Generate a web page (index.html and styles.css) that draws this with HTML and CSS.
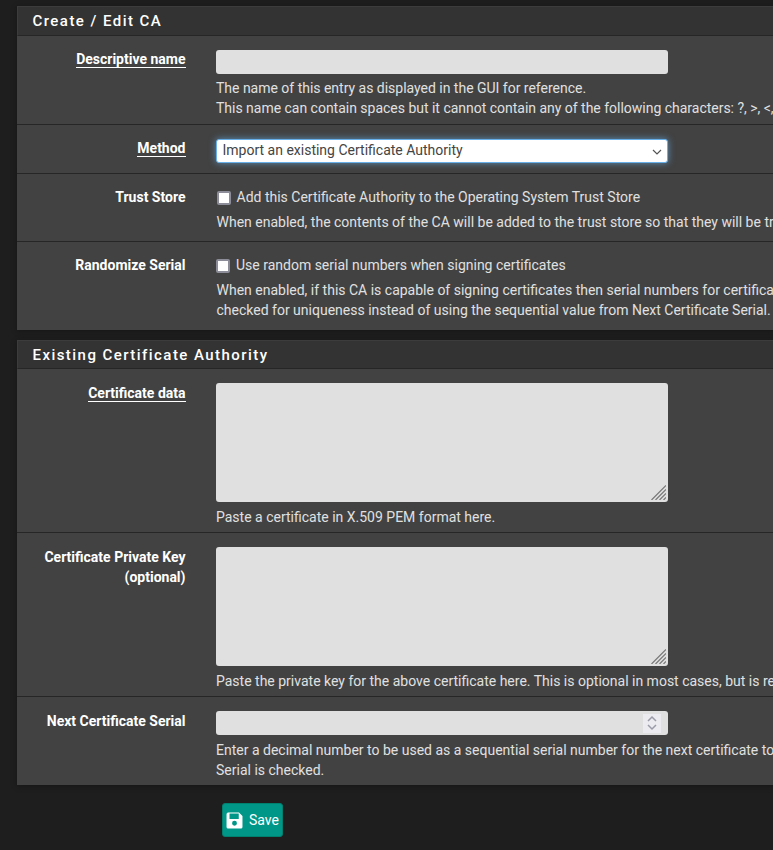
FILE: index.html
```html
<!DOCTYPE html>
<html lang="en">
<head>
<meta charset="utf-8">
<title>Create / Edit CA</title>
<link rel="stylesheet" href="styles.css">
</head>
<body>
<main class="page">
  <section class="panel">
    <h2 class="panel-title">Create / Edit CA</h2>
    <div class="row row-name">
      <div class="label"><span class="required">Descriptive name</span></div>
      <div class="field">
        <input class="control" type="text" disabled>
        <p class="help">The name of this entry as displayed in the GUI for reference.<br>This name can contain spaces but it cannot contain any of the following characters: ?, &gt;, &lt;, &amp;, /, \, ", '</p>
      </div>
    </div>
    <div class="row row-method">
      <div class="label"><span class="required">Method</span></div>
      <div class="field">
        <select class="control select">
          <option>Import an existing Certificate Authority</option>
        </select>
      </div>
    </div>
    <div class="row row-check row-trust">
      <div class="label">Trust Store</div>
      <div class="field">
        <label class="check check-trust"><input class="box" type="checkbox">Add this Certificate Authority to the Operating System Trust Store</label>
        <p class="help help-check">When enabled, the contents of the CA will be added to the trust store so that they will be trusted by the operating system.</p>
      </div>
    </div>
    <div class="row row-check row-random">
      <div class="label">Randomize Serial</div>
      <div class="field">
        <label class="check"><input class="box" type="checkbox">Use random serial numbers when signing certificates</label>
        <p class="help help-check">When enabled, if this CA is capable of signing certificates then serial numbers for certificates signed by this CA will be automatically randomized and<br>checked for uniqueness instead of using the sequential value from Next Certificate Serial.</p>
      </div>
    </div>
  </section>
  <section class="panel">
    <h2 class="panel-title">Existing Certificate Authority</h2>
    <div class="row row-area">
      <div class="label"><span class="required">Certificate data</span></div>
      <div class="field">
        <textarea class="control area" disabled></textarea>
        <p class="help help-low">Paste a certificate in X.509 PEM format here.</p>
      </div>
    </div>
    <div class="row row-area">
      <div class="label">Certificate Private Key<br>(optional)</div>
      <div class="field">
        <textarea class="control area" disabled></textarea>
        <p class="help help-low">Paste the private key for the above certificate here. This is optional in most cases, but is required when generating a Certificate Revocation List (CRL).</p>
      </div>
    </div>
    <div class="row row-serial">
      <div class="label">Next Certificate Serial</div>
      <div class="field">
        <div class="number-wrap">
          <input class="control number" type="number" disabled>
          <svg class="spinner" viewBox="0 0 18 19" aria-hidden="true"><path d="M5 7l4-4 4 4M5 11l4 4 4-4"/></svg>
        </div>
        <p class="help help-low">Enter a decimal number to be used as a sequential serial number for the next certificate to be signed by this CA. This value is ignored when Randomize<br>Serial is checked.</p>
      </div>
    </div>
  </section>
  <div class="actions">
    <button class="save" type="button">
      <svg class="save-icon" viewBox="0 0 16 16" aria-hidden="true"><path fill="#fff" fill-rule="evenodd" d="M2 0.5h10.2l3.3 3.3V14a1.5 1.5 0 0 1-1.5 1.5H2A1.5 1.5 0 0 1 .5 14V2A1.5 1.5 0 0 1 2 .5zM3.300 1.500v5h8.700v-5zM8 8.300a2.300 2.300 0 1 0 0 4.600A2.300 2.300 0 0 0 8 8.300z"/></svg>
      Save
    </button>
  </div>
</main>
</body>
</html>
```
FILE: styles.css
```css
* { box-sizing: border-box; }
html, body { margin: 0; height: 100%; overflow: hidden; background: #1e1e1e; }
body { font-family: Roboto, "Liberation Sans", sans-serif; font-size: 14px; line-height: 20px; color: #e0e0e0; }
.page { width: 1100px; padding: 6px 0 0 17px; }
.panel { background: #424242; margin-bottom: 10px; box-shadow: 0 1px 6px rgba(0,0,0,.3); }
.panel-title { margin: 0; height: 30px; padding: 0 15.5px 0 14.5px; background: #333; border-top: 1px solid #3c3c3c; border-left: 1px solid #3c3c3c; border-bottom: 1px solid #262626; font-size: 15px; font-weight: 500; line-height: 28px; letter-spacing: 1.45px; color: #fff; }
.panel + .panel .panel-title { height: 29px; }
.row { display: grid; grid-template-columns: 168.5px 1fr; column-gap: 30.5px; border-bottom: 1px solid #262626; }
.row:last-child { border-bottom: 0; }
.row-name { padding: 14px 0 6px; height: 89px; }
.row-name .help { letter-spacing: -.015px; }
.row-method { padding: 14px 0 0; height: 49px; }
.row-name .label, .row-method .label { margin-top: -1px; }
.row-check { padding: 13px 0 0; }
.row-trust { height: 68px; }
.row-random { height: 88px; }
.row-area { padding: 14px 0 0; height: 164px; }
.row-serial { padding: 14px 0 0; height: 88px; }
.label { text-align: right; font-weight: 700; color: #fff; }
.required { border-bottom: 1px solid #fff; }
.field { min-width: 0; white-space: nowrap; }
.control { display: block; width: 452px; height: 24px; margin: 0; padding: 0 6px; border: 0; border-radius: 3px; background: #e0e0e0; font: 14px/20px Roboto, sans-serif; color: #444; }
.select { appearance: none; height: 24px; padding: 0 24px 2px 5.500px; border: 1px solid #66afe9; outline: 0; background: #fff url("data:image/svg+xml,%3Csvg xmlns='http://www.w3.org/2000/svg' width='10' height='6' viewBox='0 0 10 6'%3E%3Cpath d='M1 1l4 4 4-4' fill='none' stroke='%23555' stroke-width='1.200'/%3E%3C/svg%3E") no-repeat right 5px top 9px; box-shadow: 0 0 7px rgba(102,175,233,.7); }
.area { height: 119px; border: 2px solid #e0e0e0; resize: both; }
.area::-webkit-resizer { background: url("data:image/svg+xml,%3Csvg xmlns='http://www.w3.org/2000/svg' width='15' height='15' viewBox='0 0 15 15'%3E%3Cpath d='M.5 15L15 .5M4.500 15L15 4.500M8.500 15L15 8.500M12.500 15L15 12.500' fill='none' stroke='%23777' stroke-width='1.200'/%3E%3C/svg%3E") no-repeat; }
.number-wrap { position: relative; width: 452px; }
.number::-webkit-inner-spin-button, .number::-webkit-outer-spin-button { appearance: none; margin: 0; }
.spinner { position: absolute; top: 3px; right: 7px; width: 18px; height: 19px; background: #ebebf0; }
.spinner path { fill: none; stroke: #9a9aa8; stroke-width: 1.500; }
.help { margin: 4px 0 0; color: #e0e0e0; }
.help-low { margin-top: 5px; }
.help-check { margin: 5px 0 0 .5px; }
.check { display: flex; align-items: center; height: 20px; }
.box { appearance: none; flex: none; width: 14px; height: 14px; margin: 2px 6px 0 0; background: #fff; border: 2px solid #8d8d99; border-radius: 2px; }
.check-trust .box { margin-left: 1px; margin-right: 5.500px; }
.actions { padding: 8px 0 0 205px; }
.save { display: flex; align-items: center; gap: 6px; width: 61px; height: 34px; padding: 0 0 0 3px; border: 1px solid #00806f; border-radius: 3px; background: #009688; color: #fff; font: 14px/20px Roboto, sans-serif; }
.save-icon { width: 17px; height: 17px; flex: none; }
```
